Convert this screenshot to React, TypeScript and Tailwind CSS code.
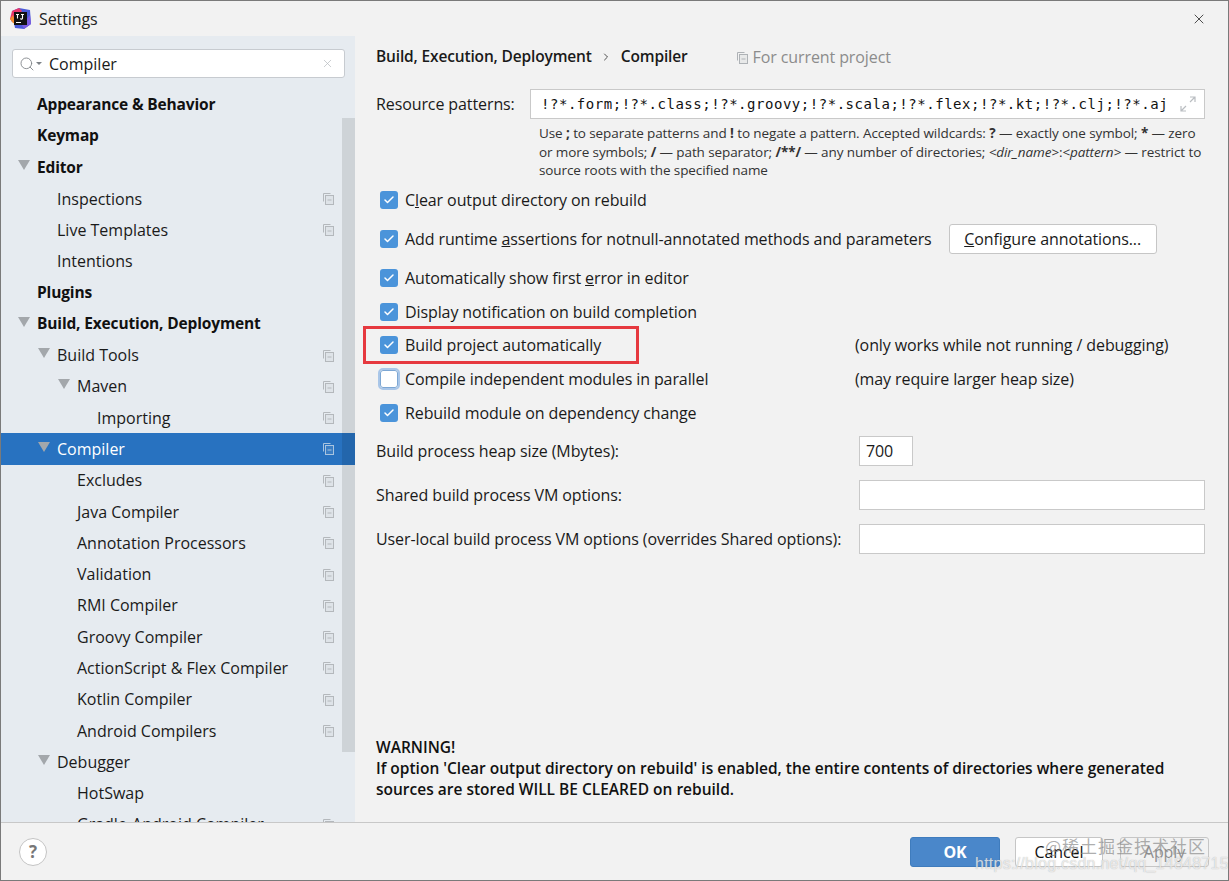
import { Check, ChevronRight, Search, X } from "lucide-react";
import type { ReactNode } from "react";

const tree: { label: string; indent: string; bold?: boolean; arrow?: boolean; copy?: boolean; active?: boolean }[] = [
  { label: "Appearance & Behavior", indent: "pl-[36px]", bold: true },
  { label: "Keymap", indent: "pl-[36px]", bold: true },
  { label: "Editor", indent: "pl-[36px]", bold: true, arrow: true },
  { label: "Inspections", indent: "pl-[56px]", copy: true },
  { label: "Live Templates", indent: "pl-[56px]", copy: true },
  { label: "Intentions", indent: "pl-[56px]" },
  { label: "Plugins", indent: "pl-[36px]", bold: true },
  { label: "Build, Execution, Deployment", indent: "pl-[36px]", bold: true, arrow: true },
  { label: "Build Tools", indent: "pl-[56px]", arrow: true, copy: true },
  { label: "Maven", indent: "pl-[76px]", arrow: true, copy: true },
  { label: "Importing", indent: "pl-[96px]", copy: true },
  { label: "Compiler", indent: "pl-[56px]", arrow: true, copy: true, active: true },
  { label: "Excludes", indent: "pl-[76px]", copy: true },
  { label: "Java Compiler", indent: "pl-[76px]", copy: true },
  { label: "Annotation Processors", indent: "pl-[76px]", copy: true },
  { label: "Validation", indent: "pl-[76px]", copy: true },
  { label: "RMI Compiler", indent: "pl-[76px]", copy: true },
  { label: "Groovy Compiler", indent: "pl-[76px]", copy: true },
  { label: "ActionScript & Flex Compiler", indent: "pl-[76px]", copy: true },
  { label: "Kotlin Compiler", indent: "pl-[76px]", copy: true },
  { label: "Android Compilers", indent: "pl-[76px]", copy: true },
  { label: "Debugger", indent: "pl-[56px]", arrow: true },
  { label: "HotSwap", indent: "pl-[76px]" },
  { label: "Gradle-Android Compiler", indent: "pl-[76px]", copy: true },
];

function CopyIcon({ className = "text-[#b4b8bc]" }: { className?: string }) {
  return (
    <svg width="12" height="13" viewBox="0 0 12 13" fill="none" stroke="currentColor" className={className}>
      <path d="M8.5 1.5H1.5V9.5" />
      <rect x="3.5" y="3.5" width="8" height="9" fill="currentColor" fillOpacity="0.15" />
      <path d="M5.5 8h4" />
    </svg>
  );
}

function Logo() {
  return (
    <svg width="21" height="21" viewBox="0 0 21 21" className="shrink-0">
      <path d="M2 3 9 0 20 2l1 14-7 5-9-1-1-5-3-2 1-4Z" fill="#4a5bd8" />
      <path d="M2 3 9 0 12 3 3 14 0 11Z" fill="#e8366b" />
      <path d="M0 11 3 7 6 16 3 15Z" fill="#f58a2c" />
      <path d="M14 21 21 16 20 7 12 17Z" fill="#7b5ce0" />
      <rect x="4" y="4" width="13" height="13" fill="#111" />
      <path d="M6 6.5h3M7.5 6.5v4M11 6.5h3M12.5 6.5v3.5a1 1 0 0 1-2 .3" stroke="#fff" strokeWidth="1.1" fill="none" />
      <path d="M6 14.5h5" stroke="#fff" strokeWidth="1" />
    </svg>
  );
}

function Box({ on = true, focus = false }: { on?: boolean; focus?: boolean }) {
  if (!on) {
    return (
      <span className={`flex h-[18px] w-[18px] shrink-0 rounded-[3px] border border-[#7da7d4] bg-white ${focus ? "outline-2 outline-[#a9c6e8]" : ""}`} />
    );
  }
  return (
    <span className="flex h-[18px] w-[18px] shrink-0 items-center justify-center rounded-[3px] bg-[#4b94da]">
      <Check size={12} strokeWidth={3} className="text-white" />
    </span>
  );
}

function CheckRow({ children, on, focus, className = "" }: { children: ReactNode; on?: boolean; focus?: boolean; className?: string }) {
  return (
    <div className={`flex items-center gap-[7px] pl-[4px] ${className}`}>
      <Box on={on} focus={focus} />
      <span className="whitespace-nowrap">{children}</span>
    </div>
  );
}

function FieldRow({ label, wide = true, value, className = "" }: { label: string; wide?: boolean; value?: string; className?: string }) {
  return (
    <div className={`flex h-[30px] items-center ${className}`}>
      <span className="w-[483px] shrink-0 whitespace-nowrap">{label}</span>
      <div className={`flex h-[30px] shrink-0 items-center border border-[#c9c9c9] bg-white px-[6px] ${wide ? "w-[346px]" : "w-[54px]"}`}>{value}</div>
    </div>
  );
}

export default function App() {
  return (
    <div className="relative flex h-[881px] w-[1229px] flex-col overflow-hidden border border-[#7a7a7a] bg-[#f2f2f2] font-['Open_Sans',sans-serif] text-[16px] tracking-[-0.1px] text-[#1a1a1a]">
      <header className="flex h-[35px] shrink-0 items-center gap-[8px] pl-[9px] pr-[21px]">
        <Logo />
        <span className="flex-1 text-[#222]">Settings</span>
        <X size={16} strokeWidth={1.3} className="text-[#333]" />
      </header>

      <div className="flex min-h-0 flex-1">
        <aside className="relative flex w-[354px] shrink-0 flex-col bg-[#e6ebf0] tracking-normal">
          <div className="px-[11px] pt-[13px] pb-[11px]">
            <div className="flex h-[29px] w-[333px] items-center rounded-[3px] border border-[#c7cbd0] bg-white pl-[6px] pr-[10px]">
              <Search size={16} strokeWidth={1.3} className="text-[#7d8287]" />
              <span className="ml-[1px] mr-[7px] h-0 w-0 border-x-[3px] border-t-[3px] border-x-transparent border-t-[#7d8287]" />
              <span className="flex-1">Compiler</span>
              <X size={13} strokeWidth={1.3} className="text-[#b5b9bd]" />
            </div>
          </div>
          <nav className="min-h-0 flex-1 overflow-hidden">
            {tree.map((r) => (
              <div
                key={r.label}
                className={`relative flex h-[31.3px] items-center pr-[21px] ${r.indent} ${r.bold ? "text-[15.5px] font-bold tracking-[-0.15px] text-[#111]" : ""} ${r.active ? "bg-[#2872c0] text-white" : ""}`}
              >
                {r.arrow && (
                  <span className="-ml-[19px] mr-[7px] mt-[-4px] h-0 w-0 border-x-[6px] border-t-[10px] border-x-transparent border-t-[#a3a7ab]" />
                )}
                <span className="flex-1 whitespace-nowrap">{r.label}</span>
                {r.copy && <CopyIcon className={r.active ? "text-[#a9c4df]" : "text-[#b4b8bc]"} />}
              </div>
            ))}
          </nav>
          {/* scrollbar sits over the list */}
          <div className="absolute left-[341px] top-[82px] h-[634px] w-[13px] bg-black/10" />
        </aside>

        <main className="flex min-w-0 flex-1 flex-col pl-[21px] pr-[23px]">
          <div className="flex h-[42px] shrink-0 items-center font-semibold">
            <span className="whitespace-nowrap text-[15.5px] tracking-[-0.15px]">Build, Execution, Deployment</span>
            <ChevronRight size={12} strokeWidth={1.5} className="ml-[8px] mr-[9px]" />
            <span className="text-[15.5px] tracking-[-0.15px]">Compiler</span>
            <span className="ml-[48px] flex items-center gap-[5px] font-normal text-[#8c8c8c]">
              <CopyIcon className="text-[#aeb2b6]" /> For current project
            </span>
          </div>

          <div className="mt-[11px] flex h-[30px] items-center">
            <span className="w-[154px] shrink-0">Resource patterns:</span>
            <div className="flex h-[30px] w-[675px] shrink-0 items-center border border-[#c9c9c9] bg-white pl-[10px] pr-[8px] font-['DejaVu_Sans_Mono','Liberation_Mono',monospace] text-[14px] tracking-[0.53px] text-[#111]">
              <span className="flex-1 overflow-hidden whitespace-nowrap">!?*.form;!?*.class;!?*.groovy;!?*.scala;!?*.flex;!?*.kt;!?*.clj;!?*.aj</span>
              <svg width="16" height="16" viewBox="0 0 16 16" fill="none" stroke="#b9bdc1" strokeWidth="1.2" className="shrink-0">
                <path d="M1 15 6 10M1 10v5h5M15 1l-5 5M10 1h5v5" />
              </svg>
            </div>
          </div>
          <p className="ml-[163px] mt-[5px] w-[664px] text-[13.5px] leading-[18.5px] tracking-[-0.1px] text-[#333]">
            Use <b>;</b> to separate patterns and <b>!</b> to negate a pattern. Accepted wildcards: <b>?</b> — exactly one symbol; <b>*</b> — zero or more symbols; <b>/</b> — path separator; <b>/**/</b> — any number of directories; <i>&lt;dir_name&gt;</i>:<i>&lt;pattern&gt;</i> — restrict to source roots with the specified name
          </p>

          <CheckRow className="mt-[9.5px] h-[22px]">
            C<u>l</u>ear output directory on rebuild
          </CheckRow>
          <div className="mt-[13px] flex h-[30px] items-center">
            <CheckRow>
              Add runtime <u>a</u>ssertions for notnull-annotated methods and parameters
            </CheckRow>
            <button className="ml-[17px] h-[30px] w-[208px] shrink-0 rounded-[3px] border border-[#c6c6c6] bg-white">
              <u>C</u>onfigure annotations...
            </button>
          </div>
          <CheckRow className="mt-[14px] h-[20px]">
            Automatically show first <u>e</u>rror in editor
          </CheckRow>
          <CheckRow className="mt-[14px] h-[20px]">Display notification on build completion</CheckRow>
          <div className="relative mt-[13px] flex h-[20px] items-center">
            <div className="absolute -left-[13px] -top-[9px] h-[38px] w-[276px] border-[3px] border-[#e6393f]" />
            <CheckRow className="w-[479px]">Build project automatically</CheckRow>
            <span className="whitespace-nowrap">(only works while not running / debugging)</span>
          </div>
          <div className="mt-[14px] flex h-[20px] items-center">
            <CheckRow on={false} focus className="w-[479px]">
              Compile independent modules in parallel
            </CheckRow>
            <span className="whitespace-nowrap">(may require larger heap size)</span>
          </div>
          <CheckRow className="mt-[14px] h-[20px]">Rebuild module on dependency change</CheckRow>

          <FieldRow label="Build process heap size (Mbytes):" wide={false} value="700" className="mt-[13px]" />
          <FieldRow label="Shared build process VM options:" className="mt-[14px]" />
          <FieldRow label="User-local build process VM options (overrides Shared options):" className="mt-[14px]" />

          <div className="mt-auto pb-[22px] text-[15.5px] leading-[21px] font-semibold tracking-normal text-[#111]">
            <p>WARNING!</p>
            <p>
              If option 'Clear output directory on rebuild' is enabled, the entire contents of directories where generated
              <br />
              sources are stored WILL BE CLEARED on rebuild.
            </p>
          </div>
        </main>
      </div>

      <footer className="flex h-[58px] shrink-0 items-center border-t border-[#c8c8c8] bg-[#f2f2f2] pl-[18px] pr-[19px]">
        <span className="flex h-[28px] w-[28px] items-center justify-center rounded-full border border-[#c4c4c4] bg-white text-[17px] font-bold text-[#777]">
          ?
        </span>
        <div className="ml-auto flex">
          <button className="h-[30px] w-[90px] rounded-[3px] border border-[#3f7cbd] bg-[#4a87ca] font-bold text-white">OK</button>
          <button className="ml-[15px] h-[30px] w-[88px] rounded-[3px] border border-[#c6c6c6] bg-white text-[#111]">Cancel</button>
          <button className="ml-[17px] h-[30px] w-[89px] rounded-[3px] border border-[#c6c6c6] bg-[#f2f2f2] text-[#8f8f8f]">Apply</button>
        </div>
      </footer>

      {/* image watermarks */}
      <span className="absolute left-[1044px] top-[832px] whitespace-nowrap font-['Noto_Sans_CJK_SC',sans-serif] text-[17px] tracking-[1px] text-[#8a8a8a]/70">
        @稀土掘金技术社区
      </span>
      <span className="absolute left-[974px] top-[851px] whitespace-nowrap font-['Liberation_Sans',sans-serif] text-[16px] tracking-[0.25px] text-white/70 [text-shadow:0_0_1px_rgba(120,120,120,0.6)]">
        https://blog.csdn.net/qq_14848715
      </span>
    </div>
  );
}
